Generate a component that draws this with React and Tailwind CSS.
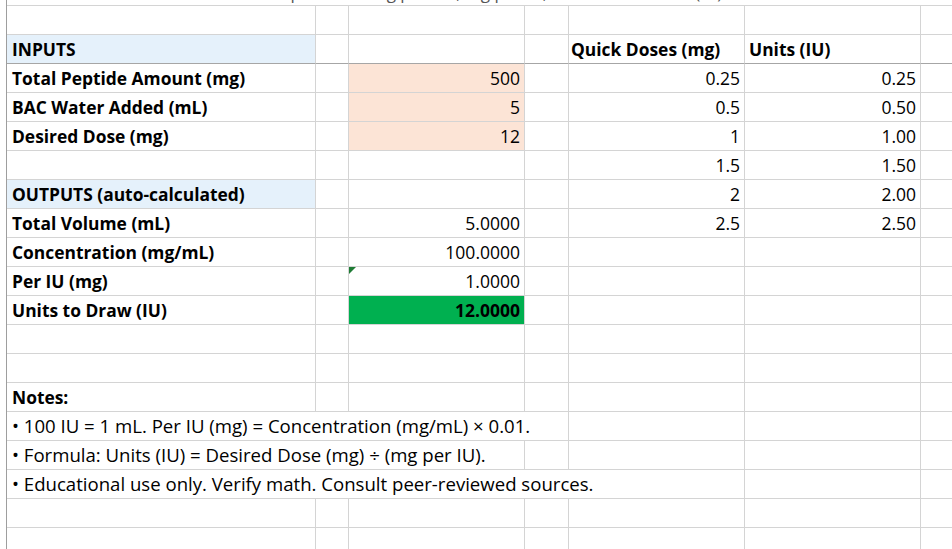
import React from "react";

const C = "shrink-0 border-r border-b border-[#d4d4d4] h-[29px] flex items-center overflow-visible whitespace-nowrap";
const widths = ["w-[309px]", "w-[33px]", "w-[176px]", "w-[44px]", "w-[176px]", "w-[176px]", "w-[40px]"];

function Row({ cells = {}, darkBottom, notes }) {
  if (notes !== undefined) {
    return (
      <div className="flex">
        <div className={`${notes.w} ${C} pl-[5px] text-[18.6px]`}>{notes.text}</div>
        {notes.rest.map((w, i) => (
          <div key={i} className={`${w} ${C}`}></div>
        ))}
      </div>
    );
  }
  return (
    <div className="flex">
      {widths.map((w, i) => {
        const c = cells[i] || {};
        return (
          <div
            key={i}
            className={`${w} ${C} ${darkBottom ? "border-b-[#a6a6a6]" : ""} ${c.cls || ""} relative`}
          >
            {c.tri && (
              <div className="absolute left-0 top-0 w-0 h-0 border-t-[7px] border-t-[#1e7b34] border-r-[7px] border-r-transparent"></div>
            )}
            {c.t}
          </div>
        );
      })}
    </div>
  );
}

const L = (t, cls = "") => ({ t, cls: `pl-[5px] font-bold text-[17.4px] ${cls}` });
const R = (t, cls = "") => ({ t, cls: `justify-end pr-[4px] ${cls}` });

export default function App() {
  return (
    <div className="w-[952px] h-[549px] overflow-hidden bg-white text-[17.5px] text-black" style={{ fontFamily: "'Open Sans', Lato, sans-serif" }}>
      <div className="flex">
        <div className="shrink-0 w-[7px] border-r border-[#9e9e9e] h-[600px]"></div>
        <div className="shrink-0">
          <div className="h-[6px] border-b border-[#d4d4d4] overflow-hidden relative w-[952px]">
            <div className="absolute top-[-20px] left-[140px] text-[#555] whitespace-nowrap text-[17px]">
              Reconstitution helper — dosing per mL, mg per IU, and units to draw (IU)
            </div>
          </div>
          <Row />
          <Row darkBottom cells={{ 0: L("INPUTS", "bg-[#e5f1fb]"), 4: { t: "Quick Doses (mg)", cls: "pl-[2px] font-bold text-[17.4px]" }, 5: { t: "Units (IU)", cls: "pl-[4px] font-bold text-[17.4px]" } }} />
          <Row cells={{ 0: L("Total Peptide Amount (mg)"), 2: R("500", "bg-[#fce4d6]"), 4: R("0.25"), 5: R("0.25") }} />
          <Row cells={{ 0: L("BAC Water Added (mL)"), 2: R("5", "bg-[#fce4d6]"), 4: R("0.5"), 5: R("0.50") }} />
          <Row cells={{ 0: L("Desired Dose (mg)"), 2: R("12", "bg-[#fce4d6]"), 4: R("1"), 5: R("1.00") }} />
          <Row cells={{ 4: R("1.5"), 5: R("1.50") }} />
          <Row cells={{ 0: L("OUTPUTS (auto-calculated)", "bg-[#e5f1fb]"), 4: R("2"), 5: R("2.00") }} />
          <Row cells={{ 0: L("Total Volume (mL)"), 2: R("5.0000"), 4: R("2.5"), 5: R("2.50") }} />
          <Row cells={{ 0: L("Concentration (mg/mL)"), 2: R("100.0000") }} />
          <Row cells={{ 0: L("Per IU (mg)"), 2: { ...R("1.0000"), tri: true } }} />
          <Row cells={{ 0: L("Units to Draw (IU)"), 2: R("12.0000", "bg-[#00b050] font-bold") }} />
          <Row />
          <Row />
          <Row cells={{ 0: L("Notes:") }} />
          <Row notes={{ w: "w-[562px]", text: "• 100 IU = 1 mL. Per IU (mg) = Concentration (mg/mL) × 0.01.", rest: ["w-[176px]", "w-[176px]", "w-[40px]"] }} />
          <Row notes={{ w: "w-[518px]", text: "• Formula: Units (IU) = Desired Dose (mg) ÷ (mg per IU).", rest: ["w-[44px]", "w-[176px]", "w-[176px]", "w-[40px]"] }} />
          <Row notes={{ w: "w-[738px]", text: "• Educational use only. Verify math. Consult peer-reviewed sources.", rest: ["w-[176px]", "w-[40px]"] }} />
          <Row />
          <Row />
        </div>
      </div>
    </div>
  );
}
